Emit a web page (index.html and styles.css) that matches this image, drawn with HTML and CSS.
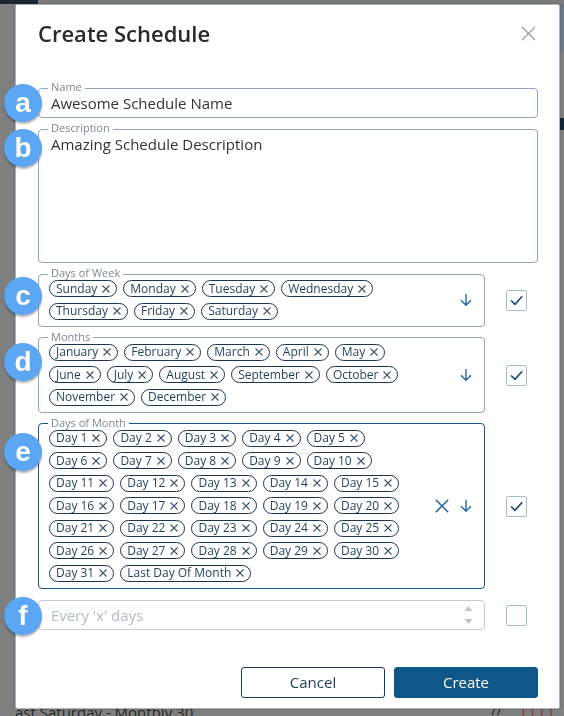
FILE: index.html
```html
<!DOCTYPE html>
<html lang="en">
<head>
<meta charset="utf-8">
<title>Create Schedule</title>
<link rel="stylesheet" href="styles.css">
</head>
<body>
<div class="page">
  <div class="page-top"><div class="brand"></div><div class="fill"></div></div>
  <div class="page-band"><div class="fill"></div><div class="band-edge"></div></div>
  <div class="page-gap"></div>
  <div class="page-dark"><div class="fill"></div><div class="dark-edge"></div></div>
  <div class="page-rest"></div>
  <div class="page-last"><span class="last-text">ast Saturday - Monthly 30</span><span class="last-marks">//</span><span class="last-red">||||</span></div>
</div>

<div class="modal">
  <header class="modal-head">
    <h1 class="modal-title">Create Schedule</h1>
    <button class="close-btn" type="button" aria-label="Close">
      <svg width="15" height="15" viewBox="0 0 15 15"><path d="M1 1 L14 14 M14 1 L1 14" stroke="#9a9a9a" stroke-width="1.2" fill="none"/></svg>
    </button>
  </header>

  <div class="modal-body">
    <fieldset class="field field-full">
      <legend>Name</legend>
      <div class="value">Awesome Schedule Name</div>
    </fieldset>

    <fieldset class="field field-full">
      <legend>Description</legend>
      <div class="value value-area">Amazing Schedule Description</div>
    </fieldset>

    <div class="row">
      <fieldset class="field field-chips">
        <legend>Days of Week</legend>
        <div class="chips">
          <span class="chip">Sunday<svg class="chip-x" viewBox="0 0 8 8"><path d="M0.5 0.5 L7.5 7.5 M7.5 0.5 L0.5 7.5"/></svg></span>
          <span class="chip">Monday<svg class="chip-x" viewBox="0 0 8 8"><path d="M0.5 0.5 L7.5 7.5 M7.5 0.5 L0.5 7.5"/></svg></span>
          <span class="chip">Tuesday<svg class="chip-x" viewBox="0 0 8 8"><path d="M0.5 0.5 L7.5 7.5 M7.5 0.5 L0.5 7.5"/></svg></span>
          <span class="chip">Wednesday<svg class="chip-x" viewBox="0 0 8 8"><path d="M0.5 0.5 L7.5 7.5 M7.5 0.5 L0.5 7.5"/></svg></span>
          <span class="chip">Thursday<svg class="chip-x" viewBox="0 0 8 8"><path d="M0.5 0.5 L7.5 7.5 M7.5 0.5 L0.5 7.5"/></svg></span>
          <span class="chip">Friday<svg class="chip-x" viewBox="0 0 8 8"><path d="M0.5 0.5 L7.5 7.5 M7.5 0.5 L0.5 7.5"/></svg></span>
          <span class="chip">Saturday<svg class="chip-x" viewBox="0 0 8 8"><path d="M0.5 0.5 L7.5 7.5 M7.5 0.5 L0.5 7.5"/></svg></span>
        </div>
        <div class="field-icons">
          <svg class="icon-arrow" viewBox="0 0 12 12"><path d="M6 0 V11.2 M1 6.2 L6 11.2 L11 6.2"/></svg>
        </div>
      </fieldset>
      <span class="check checked"><svg viewBox="0 0 21 21"><path d="M4.5 10.5 L8.8 14.8 L16.8 5.8"/></svg></span>
    </div>

    <div class="row">
      <fieldset class="field field-chips">
        <legend>Months</legend>
        <div class="chips">
          <span class="chip">January<svg class="chip-x" viewBox="0 0 8 8"><path d="M0.5 0.5 L7.5 7.5 M7.5 0.5 L0.5 7.5"/></svg></span>
          <span class="chip">February<svg class="chip-x" viewBox="0 0 8 8"><path d="M0.5 0.5 L7.5 7.5 M7.5 0.5 L0.5 7.5"/></svg></span>
          <span class="chip">March<svg class="chip-x" viewBox="0 0 8 8"><path d="M0.5 0.5 L7.5 7.5 M7.5 0.5 L0.5 7.5"/></svg></span>
          <span class="chip">April<svg class="chip-x" viewBox="0 0 8 8"><path d="M0.5 0.5 L7.5 7.5 M7.5 0.5 L0.5 7.5"/></svg></span>
          <span class="chip">May<svg class="chip-x" viewBox="0 0 8 8"><path d="M0.5 0.5 L7.5 7.5 M7.5 0.5 L0.5 7.5"/></svg></span>
          <span class="chip">June<svg class="chip-x" viewBox="0 0 8 8"><path d="M0.5 0.5 L7.5 7.5 M7.5 0.5 L0.5 7.5"/></svg></span>
          <span class="chip">July<svg class="chip-x" viewBox="0 0 8 8"><path d="M0.5 0.5 L7.5 7.5 M7.5 0.5 L0.5 7.5"/></svg></span>
          <span class="chip">August<svg class="chip-x" viewBox="0 0 8 8"><path d="M0.5 0.5 L7.5 7.5 M7.5 0.5 L0.5 7.5"/></svg></span>
          <span class="chip">September<svg class="chip-x" viewBox="0 0 8 8"><path d="M0.5 0.5 L7.5 7.5 M7.5 0.5 L0.5 7.5"/></svg></span>
          <span class="chip">October<svg class="chip-x" viewBox="0 0 8 8"><path d="M0.5 0.5 L7.5 7.5 M7.5 0.5 L0.5 7.5"/></svg></span>
          <span class="chip">November<svg class="chip-x" viewBox="0 0 8 8"><path d="M0.5 0.5 L7.5 7.5 M7.5 0.5 L0.5 7.5"/></svg></span>
          <span class="chip">December<svg class="chip-x" viewBox="0 0 8 8"><path d="M0.5 0.5 L7.5 7.5 M7.5 0.5 L0.5 7.5"/></svg></span>
        </div>
        <div class="field-icons">
          <svg class="icon-arrow" viewBox="0 0 12 12"><path d="M6 0 V11.2 M1 6.2 L6 11.2 L11 6.2"/></svg>
        </div>
      </fieldset>
      <span class="check checked"><svg viewBox="0 0 21 21"><path d="M4.5 10.5 L8.8 14.8 L16.8 5.8"/></svg></span>
    </div>

    <div class="row">
      <fieldset class="field field-chips field-active">
        <legend>Days of Month</legend>
        <div class="chips">
          <span class="chip">Day 1<svg class="chip-x" viewBox="0 0 8 8"><path d="M0.5 0.5 L7.5 7.5 M7.5 0.5 L0.5 7.5"/></svg></span>
          <span class="chip">Day 2<svg class="chip-x" viewBox="0 0 8 8"><path d="M0.5 0.5 L7.5 7.5 M7.5 0.5 L0.5 7.5"/></svg></span>
          <span class="chip">Day 3<svg class="chip-x" viewBox="0 0 8 8"><path d="M0.5 0.5 L7.5 7.5 M7.5 0.5 L0.5 7.5"/></svg></span>
          <span class="chip">Day 4<svg class="chip-x" viewBox="0 0 8 8"><path d="M0.5 0.5 L7.5 7.5 M7.5 0.5 L0.5 7.5"/></svg></span>
          <span class="chip">Day 5<svg class="chip-x" viewBox="0 0 8 8"><path d="M0.5 0.5 L7.5 7.5 M7.5 0.5 L0.5 7.5"/></svg></span>
          <span class="chip">Day 6<svg class="chip-x" viewBox="0 0 8 8"><path d="M0.5 0.5 L7.5 7.5 M7.5 0.5 L0.5 7.5"/></svg></span>
          <span class="chip">Day 7<svg class="chip-x" viewBox="0 0 8 8"><path d="M0.5 0.5 L7.5 7.5 M7.5 0.5 L0.5 7.5"/></svg></span>
          <span class="chip">Day 8<svg class="chip-x" viewBox="0 0 8 8"><path d="M0.5 0.5 L7.5 7.5 M7.5 0.5 L0.5 7.5"/></svg></span>
          <span class="chip">Day 9<svg class="chip-x" viewBox="0 0 8 8"><path d="M0.5 0.5 L7.5 7.5 M7.5 0.5 L0.5 7.5"/></svg></span>
          <span class="chip">Day 10<svg class="chip-x" viewBox="0 0 8 8"><path d="M0.5 0.5 L7.5 7.5 M7.5 0.5 L0.5 7.5"/></svg></span>
          <span class="chip">Day 11<svg class="chip-x" viewBox="0 0 8 8"><path d="M0.5 0.5 L7.5 7.5 M7.5 0.5 L0.5 7.5"/></svg></span>
          <span class="chip">Day 12<svg class="chip-x" viewBox="0 0 8 8"><path d="M0.5 0.5 L7.5 7.5 M7.5 0.5 L0.5 7.5"/></svg></span>
          <span class="chip">Day 13<svg class="chip-x" viewBox="0 0 8 8"><path d="M0.5 0.5 L7.5 7.5 M7.5 0.5 L0.5 7.5"/></svg></span>
          <span class="chip">Day 14<svg class="chip-x" viewBox="0 0 8 8"><path d="M0.5 0.5 L7.5 7.5 M7.5 0.5 L0.5 7.5"/></svg></span>
          <span class="chip">Day 15<svg class="chip-x" viewBox="0 0 8 8"><path d="M0.5 0.5 L7.5 7.5 M7.5 0.5 L0.5 7.5"/></svg></span>
          <span class="chip">Day 16<svg class="chip-x" viewBox="0 0 8 8"><path d="M0.5 0.5 L7.5 7.5 M7.5 0.5 L0.5 7.5"/></svg></span>
          <span class="chip">Day 17<svg class="chip-x" viewBox="0 0 8 8"><path d="M0.5 0.5 L7.5 7.5 M7.5 0.5 L0.5 7.5"/></svg></span>
          <span class="chip">Day 18<svg class="chip-x" viewBox="0 0 8 8"><path d="M0.5 0.5 L7.5 7.5 M7.5 0.5 L0.5 7.5"/></svg></span>
          <span class="chip">Day 19<svg class="chip-x" viewBox="0 0 8 8"><path d="M0.5 0.5 L7.5 7.5 M7.5 0.5 L0.5 7.5"/></svg></span>
          <span class="chip">Day 20<svg class="chip-x" viewBox="0 0 8 8"><path d="M0.5 0.5 L7.5 7.5 M7.5 0.5 L0.5 7.5"/></svg></span>
          <span class="chip">Day 21<svg class="chip-x" viewBox="0 0 8 8"><path d="M0.5 0.5 L7.5 7.5 M7.5 0.5 L0.5 7.5"/></svg></span>
          <span class="chip">Day 22<svg class="chip-x" viewBox="0 0 8 8"><path d="M0.5 0.5 L7.5 7.5 M7.5 0.5 L0.5 7.5"/></svg></span>
          <span class="chip">Day 23<svg class="chip-x" viewBox="0 0 8 8"><path d="M0.5 0.5 L7.5 7.5 M7.5 0.5 L0.5 7.5"/></svg></span>
          <span class="chip">Day 24<svg class="chip-x" viewBox="0 0 8 8"><path d="M0.5 0.5 L7.5 7.5 M7.5 0.5 L0.5 7.5"/></svg></span>
          <span class="chip">Day 25<svg class="chip-x" viewBox="0 0 8 8"><path d="M0.5 0.5 L7.5 7.5 M7.5 0.5 L0.5 7.5"/></svg></span>
          <span class="chip">Day 26<svg class="chip-x" viewBox="0 0 8 8"><path d="M0.5 0.5 L7.5 7.5 M7.5 0.5 L0.5 7.5"/></svg></span>
          <span class="chip">Day 27<svg class="chip-x" viewBox="0 0 8 8"><path d="M0.5 0.5 L7.5 7.5 M7.5 0.5 L0.5 7.5"/></svg></span>
          <span class="chip">Day 28<svg class="chip-x" viewBox="0 0 8 8"><path d="M0.5 0.5 L7.5 7.5 M7.5 0.5 L0.5 7.5"/></svg></span>
          <span class="chip">Day 29<svg class="chip-x" viewBox="0 0 8 8"><path d="M0.5 0.5 L7.5 7.5 M7.5 0.5 L0.5 7.5"/></svg></span>
          <span class="chip">Day 30<svg class="chip-x" viewBox="0 0 8 8"><path d="M0.5 0.5 L7.5 7.5 M7.5 0.5 L0.5 7.5"/></svg></span>
          <span class="chip">Day 31<svg class="chip-x" viewBox="0 0 8 8"><path d="M0.5 0.5 L7.5 7.5 M7.5 0.5 L0.5 7.5"/></svg></span>
          <span class="chip">Last Day Of Month<svg class="chip-x" viewBox="0 0 8 8"><path d="M0.5 0.5 L7.5 7.5 M7.5 0.5 L0.5 7.5"/></svg></span>
        </div>
        <div class="field-icons">
          <svg class="icon-clear" viewBox="0 0 14 14"><path d="M0.8 0.8 L13.2 13.2 M13.2 0.8 L0.8 13.2"/></svg>
          <svg class="icon-arrow" viewBox="0 0 12 12"><path d="M6 0 V11.2 M1 6.2 L6 11.2 L11 6.2"/></svg>
        </div>
      </fieldset>
      <span class="check checked"><svg viewBox="0 0 21 21"><path d="M4.5 10.5 L8.8 14.8 L16.8 5.8"/></svg></span>
    </div>

    <div class="row row-plain">
      <div class="number-field">
        <span class="placeholder">Every 'x' days</span>
        <span class="spinner">
          <svg viewBox="0 0 9 6"><path d="M4.5 0 L9 6 H0 Z"/></svg>
          <svg viewBox="0 0 9 6"><path d="M0 0 H9 L4.5 6 Z"/></svg>
        </span>
      </div>
      <span class="check"></span>
    </div>
  </div>

  <footer class="modal-foot">
    <button class="btn btn-outline" type="button">Cancel</button>
    <button class="btn btn-primary" type="button">Create</button>
  </footer>

  <span class="badge badge-a">a</span>
  <span class="badge badge-b">b</span>
  <span class="badge badge-c">c</span>
  <span class="badge badge-d">d</span>
  <span class="badge badge-e">e</span>
  <span class="badge badge-f">f</span>
</div>
</body>
</html>
```

FILE: styles.css
```css
* { box-sizing: border-box; }

html, body {
  margin: 0;
  padding: 0;
  width: 564px;
  height: 716px;
  overflow: hidden;
}

body {
  background: #7f7f7f;
  font-family: "Open Sans", "Noto Sans", sans-serif;
}

/* background page behind the dialog */
.page {
  display: flex;
  flex-direction: column;
  height: 716px;
}
.page .fill { flex: 1; }
.page-top { display: flex; height: 4px; }
.page-top .brand { width: 38px; background: #1b2633; }
.page-top .fill { background: #7b7b7b; }
.page-band { display: flex; height: 48px; }
.page-band .band-edge { width: 8px; background: #6c7885; }
.page-gap { height: 66px; }
.page-dark { display: flex; height: 12px; }
.page-dark .dark-edge { width: 8px; background: #162636; }
.page-rest { flex: 1; }
.page-last {
  display: flex;
  align-items: flex-start;
  height: 12px;
  padding-left: 15px;
  overflow: hidden;
  font-family: "Open Sans", sans-serif;
  font-size: 15px;
  line-height: 18px;
  color: #262626;
}
.last-text { margin-top: -1px; }
.last-marks { margin-left: 298px; margin-top: -4px; color: #1d2733; }
.last-red { margin-left: 17px; margin-top: -4px; color: #8b2a2a; letter-spacing: 1px; }

/* dialog */
.modal {
  position: fixed;
  left: 15px;
  top: 4px;
  width: 545px;
  background: #fff;
  border: 1px solid #a9b5c2;
  border-radius: 2px;
  box-shadow: 0 0 2px rgba(0, 0, 0, 0.35);
  padding: 13px 21px 10px 22px;
}

.modal-head {
  display: flex;
  align-items: center;
  justify-content: space-between;
}
.modal-title {
  margin: 0;
  font-size: 22px;
  line-height: 30px;
  font-weight: 600;
  color: #292929;
}
.close-btn {
  border: 0;
  background: none;
  padding: 0;
  margin-right: 2px;
  width: 15px;
  height: 15px;
  display: flex;
}
.close-btn svg { width: 15px; height: 15px; }

.modal-body {
  margin-top: 33px;
  display: flex;
  flex-direction: column;
  gap: 4px;
}

.field {
  margin: 0;
  min-width: 0;
  border: 1px solid #8ea6c3;
  border-radius: 4px;
  padding: 0 12px 6px 10px;
}
.field legend {
  font-size: 11px;
  line-height: 12px;
  padding: 0 3px 2px;
  margin-left: -1px;
  color: #75899a;
}
.field-full { width: 500px; }

.value {
  padding-left: 2px;
  font-size: 15px;
  line-height: 16px;
  color: #333;
}
.value-area { height: 120px; }

.row {
  display: flex;
  align-items: center;
  gap: 21px;
}
.row .check { margin-top: 7px; }
.row-plain { margin-top: 7px; }
.row-plain .check { margin-top: 2px; }

.field-chips {
  width: 447px;
  display: flex;
  align-items: center;
}
.field-active { border-color: #15578a; }

.chips {
  flex: 1;
  min-width: 0;
  margin-top: -1px;
  display: flex;
  flex-wrap: wrap;
  gap: 5.5px 6px;
}
.chip {
  display: inline-flex;
  align-items: center;
  height: 17px;
  border: 1.5px solid #19354f;
  border-radius: 9px;
  padding: 0 6px 0 6px;
  font-size: 12px;
  line-height: 14px;
  color: #1f3f5c;
  white-space: nowrap;
}
.chip-x {
  width: 8px;
  height: 8px;
  margin-left: 5px;
  stroke: #3d546a;
  stroke-width: 1.1;
  fill: none;
}

.field-icons {
  width: 46px;
  display: flex;
  align-items: center;
  justify-content: flex-end;
  gap: 11px;
}
.icon-arrow {
  width: 12px;
  height: 12px;
  stroke: #2166a3;
  stroke-width: 1.4;
  fill: none;
}
.icon-clear {
  width: 14px;
  height: 14px;
  stroke: #2166a3;
  stroke-width: 1.5;
  fill: none;
}

.check {
  width: 21px;
  height: 21px;
  flex: none;
  border: 1px solid #a2c0cc;
  border-radius: 2px;
  background: #fff;
  display: flex;
}
.check svg {
  width: 19px;
  height: 19px;
  stroke: #1d4a72;
  stroke-width: 1.8;
  fill: none;
}

.number-field {
  width: 447px;
  height: 30px;
  border: 1px solid #cacaca;
  border-radius: 4px;
  display: flex;
  align-items: center;
  padding: 0 11px 0 12px;
}
.placeholder {
  flex: 1;
  font-size: 15px;
  line-height: 18px;
  color: #afbccb;
}
.spinner {
  display: flex;
  flex-direction: column;
  gap: 8px;
}
.spinner svg {
  width: 9px;
  height: 5px;
  fill: #c2c2c2;
}

.modal-foot {
  margin-top: 37px;
  display: flex;
  justify-content: flex-end;
  gap: 9px;
}
.btn {
  width: 144px;
  height: 31px;
  border-radius: 3px;
  font-family: "Open Sans", sans-serif;
  font-size: 15px;
  line-height: 20px;
  padding: 0;
}
.btn-outline {
  background: #fff;
  border: 1px solid #1c3d59;
  color: #1c3d59;
}
.btn-primary {
  background: #0f5788;
  border: 1px solid #0f5788;
  color: #fff;
}

/* annotation badges over the dialog edge */
.badge {
  position: absolute;
  left: -12px;
  width: 38px;
  height: 38px;
  border-radius: 50%;
  background: #5ca7f4;
  box-shadow: 0 2px 2px rgba(0, 0, 0, 0.3);
  color: #fff;
  font-family: "Liberation Sans", Arial, sans-serif;
  font-weight: 700;
  font-size: 28px;
  line-height: 38px;
  text-align: center;
}
.badge-a { top: 79px; }
.badge-b { top: 124px; }
.badge-c { top: 272px; }
.badge-d { top: 338px; }
.badge-e { top: 428px; }
.badge-f { top: 592px; }
```
